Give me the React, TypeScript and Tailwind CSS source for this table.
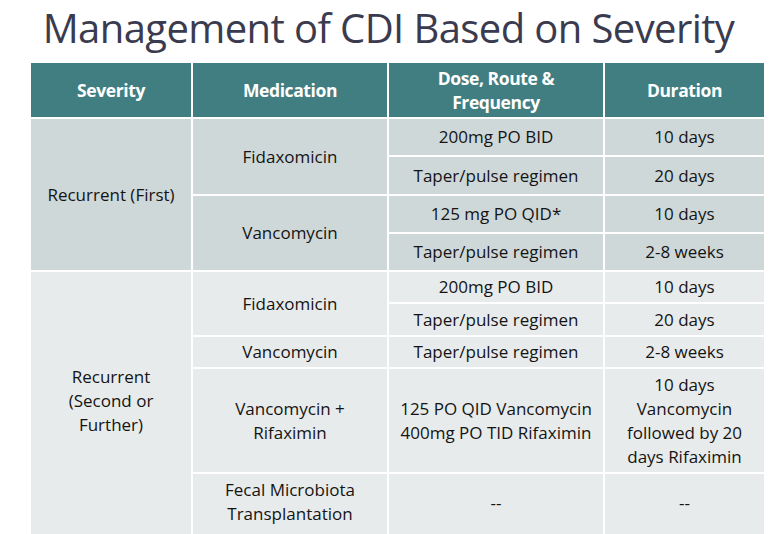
const HEAD = 'flex items-center justify-center text-center bg-[#417e82] text-white font-bold text-[17.5px] leading-[24px] tracking-[-0.4px]';
const DARK = 'flex items-center justify-center text-center bg-[#cfd8d9]';
const LIGHT = 'flex items-center justify-center text-center bg-[#e8ebeb]';

export default function App() {
  return (
    <div className="w-[777px] h-[534px] overflow-hidden bg-white font-['Open_Sans',sans-serif] text-[#141414]">
      <h1 className="h-[63px] pt-[4px] text-center text-[40px] leading-[48px] text-[#3a3b4f] tracking-[-0.6px]">
        Management of CDI Based on Severity
      </h1>
      <div className="ml-[31px] grid w-[731px] grid-cols-[160px_194px_214px_159px] grid-rows-[54px_36px_37px_36px_36px_30px_31px_30px_103px_60px] gap-[2px] bg-white text-[17px] leading-[24px]">
        <div className={HEAD}>Severity</div>
        <div className={HEAD}>Medication</div>
        <div className={HEAD}>
          Dose, Route &amp;
          <br />
          Frequency
        </div>
        <div className={HEAD}>Duration</div>

        <div className={`${DARK} row-span-4 row-start-2 col-start-1`}>Recurrent (First)</div>
        <div className={`${DARK} row-span-2 row-start-2 col-start-2`}>Fidaxomicin</div>
        <div className={`${DARK} row-start-2 col-start-3`}>200mg PO BID</div>
        <div className={`${DARK} row-start-2 col-start-4`}>10 days</div>
        <div className={`${DARK} row-start-3 col-start-3`}>Taper/pulse regimen</div>
        <div className={`${DARK} row-start-3 col-start-4`}>20 days</div>
        <div className={`${DARK} row-span-2 row-start-4 col-start-2`}>Vancomycin</div>
        <div className={`${DARK} row-start-4 col-start-3`}>125 mg PO QID*</div>
        <div className={`${DARK} row-start-4 col-start-4`}>10 days</div>
        <div className={`${DARK} row-start-5 col-start-3`}>Taper/pulse regimen</div>
        <div className={`${DARK} row-start-5 col-start-4`}>2-8 weeks</div>

        <div className={`${LIGHT} row-span-5 row-start-6 col-start-1 pb-[4px]`}>
          Recurrent
          <br />
          (Second or
          <br />
          Further)
        </div>
        <div className={`${LIGHT} row-span-2 row-start-6 col-start-2`}>Fidaxomicin</div>
        <div className={`${LIGHT} row-start-6 col-start-3`}>200mg PO BID</div>
        <div className={`${LIGHT} row-start-6 col-start-4`}>10 days</div>
        <div className={`${LIGHT} row-start-7 col-start-3`}>Taper/pulse regimen</div>
        <div className={`${LIGHT} row-start-7 col-start-4`}>20 days</div>
        <div className={`${LIGHT} row-start-8 col-start-2`}>Vancomycin</div>
        <div className={`${LIGHT} row-start-8 col-start-3`}>Taper/pulse regimen</div>
        <div className={`${LIGHT} row-start-8 col-start-4`}>2-8 weeks</div>
        <div className={`${LIGHT} row-start-9 col-start-2`}>
          Vancomycin +
          <br />
          Rifaximin
        </div>
        <div className={`${LIGHT} row-start-9 col-start-3`}>
          125 PO QID Vancomycin
          <br />
          400mg PO TID Rifaximin
        </div>
        <div className={`${LIGHT} row-start-9 col-start-4`}>
          10 days
          <br />
          Vancomycin
          <br />
          followed by 20
          <br />
          days Rifaximin
        </div>
        <div className={`${LIGHT} row-start-10 col-start-2 items-start pt-[4px]`}>
          Fecal Microbiota
          <br />
          Transplantation
        </div>
        <div className={`${LIGHT} row-start-10 col-start-3 items-start pt-[17px]`}>--</div>
        <div className={`${LIGHT} row-start-10 col-start-4 items-start pt-[17px]`}>--</div>
      </div>
    </div>
  );
}
